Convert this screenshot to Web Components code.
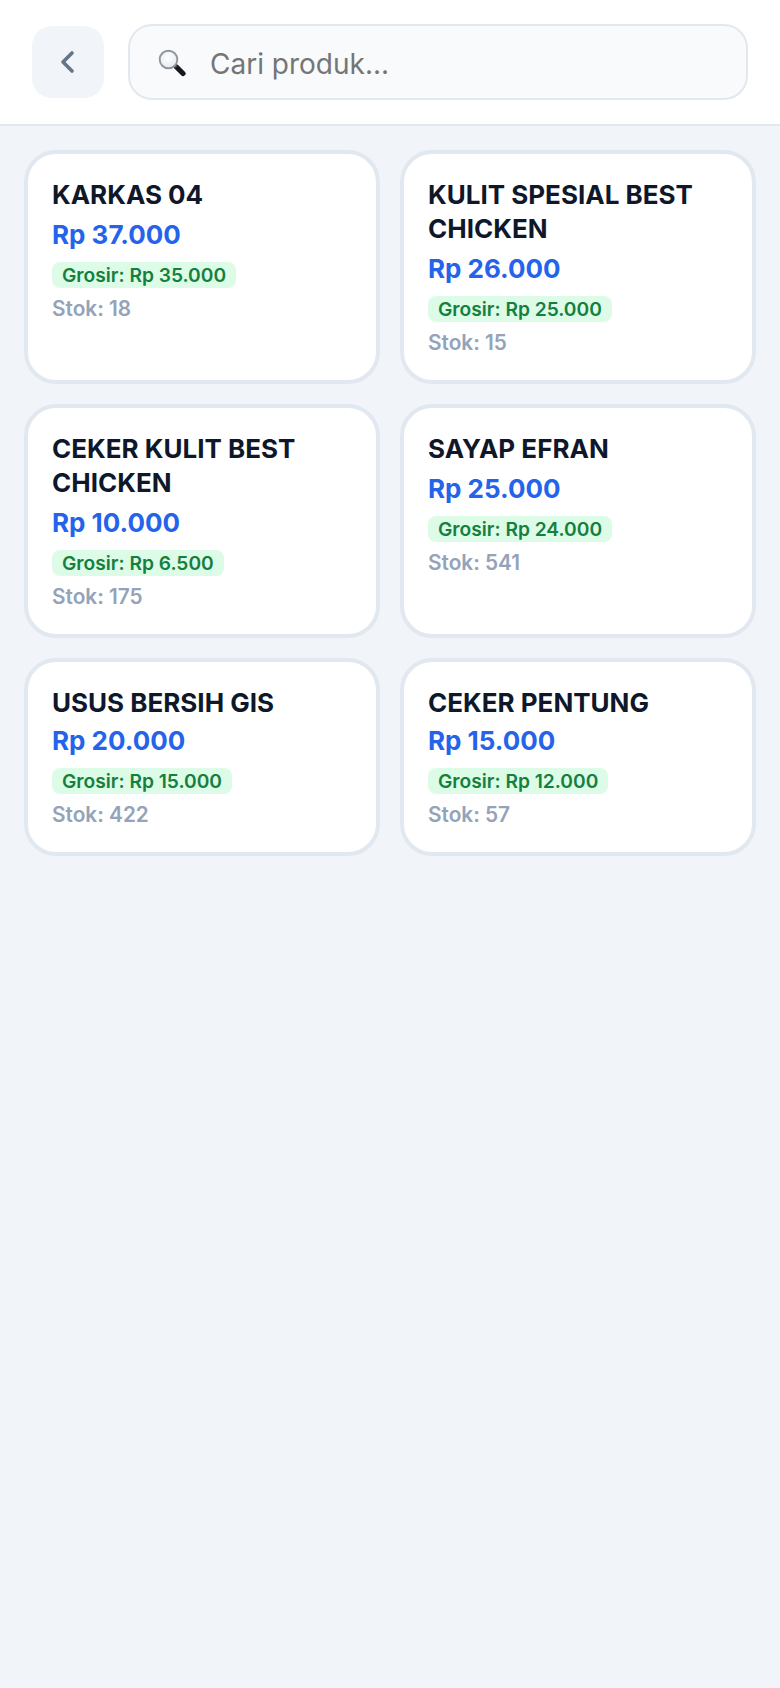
<!DOCTYPE html>
<html>
<head>
<meta charset="utf-8">
<title>Cari produk</title>
<style>
  html, body { margin: 0; height: 100%; }
  body { background: #f1f5f9; font-family: Inter, "Noto Sans", sans-serif; }
</style>
</head>
<body>
<search-header placeholder="Cari produk..."></search-header>
<product-grid>
  <product-card roomy name="KARKAS 04" price="Rp 37.000" grosir="Grosir: Rp 35.000" stok="Stok: 18"></product-card>
  <product-card roomy name="KULIT SPESIAL BEST CHICKEN" price="Rp 26.000" grosir="Grosir: Rp 25.000" stok="Stok: 15"></product-card>
  <product-card roomy name="CEKER KULIT BEST CHICKEN" price="Rp 10.000" grosir="Grosir: Rp 6.500" stok="Stok: 175"></product-card>
  <product-card roomy name="SAYAP EFRAN" price="Rp 25.000" grosir="Grosir: Rp 24.000" stok="Stok: 541"></product-card>
  <product-card name="USUS BERSIH GIS" price="Rp 20.000" grosir="Grosir: Rp 15.000" stok="Stok: 422"></product-card>
  <product-card name="CEKER PENTUNG" price="Rp 15.000" grosir="Grosir: Rp 12.000" stok="Stok: 57"></product-card>
</product-grid>
<script>
class SearchHeader extends HTMLElement {
  constructor() {
    super();
    this.attachShadow({ mode: "open" });
    this.shadowRoot.innerHTML = `
      <style>
        :host {
          display: flex;
          align-items: center;
          gap: 24px;
          padding: 24px 32px;
          background: #fff;
          border-bottom: 2px solid #e2e8f0;
        }
        .back {
          flex: none;
          width: 72px;
          height: 72px;
          border-radius: 20px;
          background: #f1f5f9;
          display: flex;
          align-items: center;
          justify-content: center;
        }
        .search {
          flex: 1;
          height: 76px;
          box-sizing: border-box;
          display: flex;
          align-items: center;
          gap: 24px;
          padding: 0 28px;
          background: #f8fafc;
          border: 2px solid #e2e8f0;
          border-radius: 24px;
        }
        .search svg { margin-top: 2px; }
        .text { font-size: 28px; color: #757575; padding-top: 4px; }
      </style>
      <div class="back">
        <svg width="32" height="32" viewBox="0 0 32 32" fill="none">
          <path d="M20 7 L11 16 L20 25" stroke="#64748b" stroke-width="3.6" stroke-linecap="round" stroke-linejoin="round"/>
        </svg>
      </div>
      <div class="search">
        <svg width="28" height="28" viewBox="0 0 28 28">
          <defs>
            <radialGradient id="glass" cx="0.45" cy="0.4" r="0.6">
              <stop offset="0" stop-color="#ffffff"/>
              <stop offset="1" stop-color="#e6e9ed"/>
            </radialGradient>
          </defs>
          <path d="M18.5 18 L25 24.5" stroke="#15181c" stroke-width="5.2" stroke-linecap="round"/>
          <path d="M15.5 15 L18.5 18" stroke="#4c5157" stroke-width="2.8"/>
          <circle cx="10.5" cy="10.5" r="8.8" fill="url(#glass)" stroke="#8f969e" stroke-width="1.9"/>
        </svg>
        <span class="text">${this.getAttribute("placeholder")}</span>
      </div>`;
  }
}

class ProductGrid extends HTMLElement {
  constructor() {
    super();
    this.attachShadow({ mode: "open" });
    this.shadowRoot.innerHTML = `
      <style>
        :host {
          display: grid;
          grid-template-columns: 1fr 1fr;
          gap: 20px;
          padding: 24px;
        }
      </style>
      <slot></slot>`;
  }
}

class ProductCard extends HTMLElement {
  constructor() {
    super();
    this.attachShadow({ mode: "open" });
    this.shadowRoot.innerHTML = `
      <style>
        :host {
          display: block;
          min-width: 0;
          padding: 24px;
          background: #fff;
          border: 4px solid #e2e8f0;
          border-radius: 32px;
        }
        .name { font-size: 26px; line-height: 34px; font-weight: 700; color: #0f172a; margin-bottom: 4px; }
        :host([roomy]) .name { margin-bottom: 6px; }
        .price { font-size: 26px; line-height: 34px; font-weight: 700; color: #2563eb; margin-bottom: 10px; }
        .grosir {
          display: inline-block;
          font-size: 19.2px;
          line-height: 26px;
          font-weight: 600;
          color: #15803d;
          background: #dcfce7;
          padding: 0 10px;
          border-radius: 8px;
          vertical-align: top;
        }
        .stok { font-size: 20.8px; line-height: 26px; font-weight: 600; color: #94a3b8; margin-top: 8px; }
      </style>
      <div class="name">${this.getAttribute("name")}</div>
      <div class="price">${this.getAttribute("price")}</div>
      <div><span class="grosir">${this.getAttribute("grosir")}</span></div>
      <div class="stok">${this.getAttribute("stok")}</div>`;
  }
}

customElements.define("search-header", SearchHeader);
customElements.define("product-grid", ProductGrid);
customElements.define("product-card", ProductCard);
</script>
</body>
</html>
